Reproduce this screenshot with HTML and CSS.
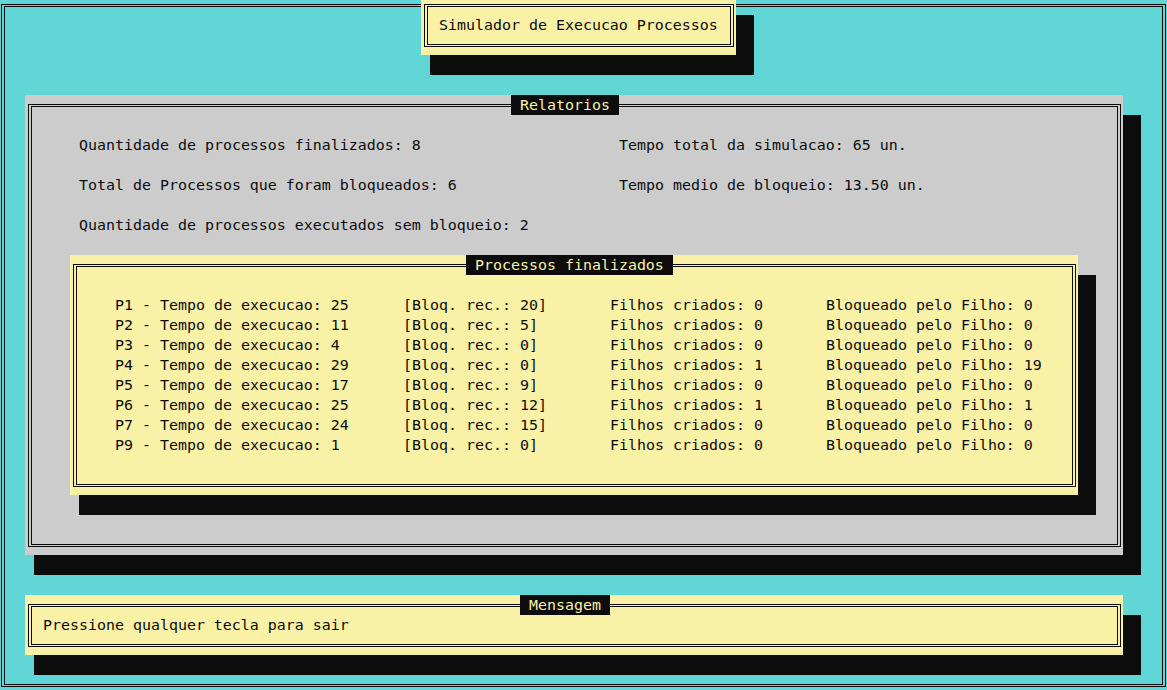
FILE: index.html
```html
<!DOCTYPE html>
<html lang="pt">
<head>
<meta charset="utf-8">
<title>Simulador de Execucao Processos</title>
<link rel="stylesheet" href="styles.css">
</head>
<body>
<div class="screen">
  <div class="screen-frame"><div class="screen-frame-in"></div></div>

  <section class="win win-title">
    <div class="box"><div class="box-in pad-sm">
      <p class="line">Simulador de Execucao Processos</p>
    </div></div>
  </section>

  <section class="win win-rel">
    <h2 class="label label-rel">Relatorios</h2>
    <div class="box"><div class="box-in pad-lg">
      <div class="stats">
        <span>Quantidade de processos finalizados: 8</span>
        <span>Tempo total da simulacao: 65 un.</span>
        <span>Total de Processos que foram bloqueados: 6</span>
        <span>Tempo medio de bloqueio: 13.50 un.</span>
        <span>Quantidade de processos executados sem bloqueio: 2</span>
      </div>

      <section class="win win-proc">
        <h3 class="label label-proc">Processos finalizados</h3>
        <div class="box"><div class="box-in pad-lg">
          <div class="procs">
            <span>P1 - Tempo de execucao: 25</span><span>[Bloq. rec.: 20]</span><span>Filhos criados: 0</span><span>Bloqueado pelo Filho: 0</span>
            <span>P2 - Tempo de execucao: 11</span><span>[Bloq. rec.: 5]</span><span>Filhos criados: 0</span><span>Bloqueado pelo Filho: 0</span>
            <span>P3 - Tempo de execucao: 4</span><span>[Bloq. rec.: 0]</span><span>Filhos criados: 0</span><span>Bloqueado pelo Filho: 0</span>
            <span>P4 - Tempo de execucao: 29</span><span>[Bloq. rec.: 0]</span><span>Filhos criados: 1</span><span>Bloqueado pelo Filho: 19</span>
            <span>P5 - Tempo de execucao: 17</span><span>[Bloq. rec.: 9]</span><span>Filhos criados: 0</span><span>Bloqueado pelo Filho: 0</span>
            <span>P6 - Tempo de execucao: 25</span><span>[Bloq. rec.: 12]</span><span>Filhos criados: 1</span><span>Bloqueado pelo Filho: 1</span>
            <span>P7 - Tempo de execucao: 24</span><span>[Bloq. rec.: 15]</span><span>Filhos criados: 0</span><span>Bloqueado pelo Filho: 0</span>
            <span>P9 - Tempo de execucao: 1</span><span>[Bloq. rec.: 0]</span><span>Filhos criados: 0</span><span>Bloqueado pelo Filho: 0</span>
          </div>
        </div></div>
      </section>
    </div></div>
  </section>

  <section class="win win-msg">
    <h2 class="label label-msg">Mensagem</h2>
    <div class="box"><div class="box-in pad-sm">
      <p class="line">Pressione qualquer tecla para sair</p>
    </div></div>
  </section>
</div>
</body>
</html>
```

FILE: styles.css
```css
* { box-sizing: border-box; }

html, body {
  margin: 0;
  padding: 0;
  background: #61d6d6;
}

body {
  font-family: "DejaVu Sans Mono", "Liberation Mono", monospace;
  font-size: 14.95px;
  line-height: 20px;
  color: #0c0c0c;
  overflow: hidden;
}

.screen {
  position: relative;
  width: 1167px;
  height: 690px;
  overflow: hidden;
  background: #61d6d6;
  padding: 4px 1px 3px 1px;
  display: flex;
}

.screen-frame {
  flex: 1;
  display: flex;
  border: 1px solid #0c0c0c;
  padding: 1px 2px;
}

.screen-frame-in {
  flex: 1;
  border: 1px solid #0c0c0c;
}

/* terminal windows */
.win {
  display: flex;
  flex-direction: column;
  box-shadow: 9px 20px 0 #0c0c0c, 18px 20px 0 #0c0c0c;
}

.box {
  flex: 1;
  display: flex;
  margin: 9px 2px 8px 3px;
  border: 1px solid #0c0c0c;
  padding: 1px 2px;
}

.box-in {
  flex: 1;
  border: 1px solid #0c0c0c;
}

.pad-sm { padding: 8px 0 0 11px; }
.pad-lg { padding: 28px 0 0 38px; }

.line {
  margin: 0;
  white-space: pre;
}

.win-title {
  position: absolute;
  left: 421px;
  top: -5px;
  width: 315px;
  height: 60px;
  background: #f9f1a5;
}

.win-rel {
  position: absolute;
  left: 25px;
  top: 95px;
  width: 1098px;
  height: 460px;
  background: #cccccc;
}

.win-msg {
  position: absolute;
  left: 25px;
  top: 595px;
  width: 1098px;
  height: 60px;
  background: #f9f1a5;
}

.win-proc {
  position: relative;
  margin-top: 20px;
  width: 1008px;
  height: 240px;
  background: #f9f1a5;
}

/* window titles sitting on the top border */
.label {
  position: absolute;
  top: 0;
  height: 20px;
  margin: 0;
  padding: 0 9px;
  font-size: inherit;
  font-weight: normal;
  line-height: 20px;
  white-space: pre;
  background: #0c0c0c;
  color: #f9f1a5;
}

.label-rel { left: 486px; }
.label-proc { left: 396px; }
.label-msg { left: 495px; }

.stats {
  display: grid;
  grid-template-columns: 540px auto;
  row-gap: 20px;
  margin-left: 9px;
  white-space: pre;
}

.procs {
  display: grid;
  grid-template-columns: 288px 207px 216px auto;
  white-space: pre;
}
```
